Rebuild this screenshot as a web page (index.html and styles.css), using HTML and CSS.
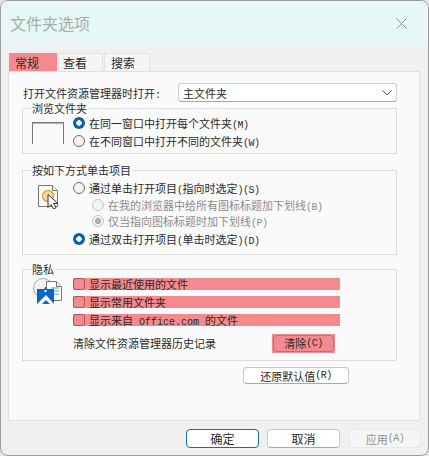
FILE: index.html
```html
<!DOCTYPE html>
<html lang="zh-CN">
<head>
<meta charset="utf-8">
<title>文件夹选项</title>
<link rel="stylesheet" href="styles.css">
</head>
<body>
<div class="window">
  <header class="titlebar">
    <span class="title">文件夹选项</span>
    <svg class="close" width="11" height="11" viewBox="0 0 11 11"><path d="M.5.5l10 10M10.500.5l-10 10" stroke="#8a8f8f" fill="none"/></svg>
  </header>
  <main class="body">
    <nav class="tabs">
      <span class="tab tab-active">常规</span>
      <span class="tab">查看</span>
      <span class="tab tab-last">搜索</span>
    </nav>
    <section class="panel">
      <div class="open-row">
        <span class="open-label">打开文件资源管理器时打开<span class="key">:</span></span>
        <div class="select">
          <span>主文件夹</span>
          <svg width="10" height="6" viewBox="0 0 10 6"><path d="M.5.5l4.500 4.500 4.500-4.500" stroke="#555" fill="none"/></svg>
        </div>
      </div>

      <div class="group group-browse">
        <span class="legend">浏览文件夹</span>
        <div class="icon-col icon-browse">
          <svg width="32" height="22" viewBox="0 0 32 22"><path d="M.5 22V.5h31V22" fill="none" stroke="#777"/><path d="M0 0h32v1.500H0z" fill="#777"/><path d="M24 1.500h1v1h-1zM26 1.500h1v1h-1zM28 1.500h1v1h-1z" fill="#bbb"/></svg>
        </div>
        <div class="options">
          <label class="radio-row"><span class="radio radio-on"></span><span>在同一窗口中打开每个文件夹<span class="key">(M)</span></span></label>
          <label class="radio-row"><span class="radio"></span><span>在不同窗口中打开不同的文件夹<span class="key">(W)</span></span></label>
        </div>
      </div>

      <div class="group group-click">
        <span class="legend">按如下方式单击项目</span>
        <div class="icon-col icon-click">
          <svg width="22" height="24" viewBox="0 0 22 24">
            <path d="M.5 21.500V.5h14l5 5v16z" fill="#fafafa" stroke="#777"/>
            <path d="M14.500.5v5h5" fill="#eee" stroke="#777"/>
            <circle cx="10" cy="11" r="5.500" fill="#fbd9a0" stroke="#f2a33a" stroke-width="1.500"/>
            <path d="M10 9.500v13l3-3 2.500 4.500 2.500-1.300-2.500-4.200h4.500z" fill="#fff" stroke="#333"/>
          </svg>
        </div>
        <div class="options">
          <label class="radio-row"><span class="radio"></span><span>通过单击打开项目<span class="key">(</span>指向时选定<span class="key">)(S)</span></span></label>
          <label class="radio-row radio-sub is-disabled"><span class="radio radio-disabled"></span><span>在我的浏览器中给所有图标标题加下划线<span class="key">(B)</span></span></label>
          <label class="radio-row radio-sub is-disabled"><span class="radio radio-disabled radio-disabled-on"></span><span>仅当指向图标标题时加下划线<span class="key">(P)</span></span></label>
          <label class="radio-row"><span class="radio radio-on"></span><span>通过双击打开项目<span class="key">(</span>单击时选定<span class="key">)(D)</span></span></label>
        </div>
      </div>

      <div class="group group-privacy">
        <span class="legend">隐私</span>
        <div class="icon-col icon-privacy">
          <svg width="31" height="27" viewBox="0 0 31 27">
            <circle cx="10" cy="10" r="9.500" fill="#f2f2f2" stroke="#aaa"/>
            <path d="M13.500 3.500h10l5 5v14h-15z" fill="#fff" stroke="#777"/>
            <path d="M23.500 3.500v5h5" fill="#eee" stroke="#777"/>
            <path d="M18 10h8M18 13h8M18 16h8" stroke="#3aa0e6"/>
            <path d="M4 11h7l1-2h1l1 2h7v15H4z" fill="#0a63c9"/>
            <path d="M4 26l9-9 8 9h-4l-4-4-4 4z" fill="#fff"/>
            <circle cx="12.500" cy="13" r="1.200" fill="#fff"/>
          </svg>
        </div>
        <div class="options">
          <label class="check-row"><span class="check"></span><span>显示最近使用的文件</span></label>
          <label class="check-row"><span class="check"></span><span>显示常用文件夹</span></label>
          <label class="check-row"><span class="check"></span><span>显示来自<span class="latin"> Office.com </span>的文件</span></label>
          <div class="clear-row">
            <span>清除文件资源管理器历史记录</span>
            <span class="clear-wrap"><button class="btn btn-clear">清除<span class="key">(C)</span></button></span>
          </div>
        </div>
      </div>

      <div class="restore-row"><button class="btn btn-restore">还原默认值<span class="key">(R)</span></button></div>
    </section>
    <footer class="footer">
      <button class="btn btn-foot btn-primary">确定</button>
      <button class="btn btn-foot">取消</button>
      <button class="btn btn-foot btn-disabled">应用<span class="key">(A)</span></button>
    </footer>
  </main>
</div>
</body>
</html>
```
FILE: styles.css
```css
* { box-sizing: border-box; }
html, body { margin: 0; padding: 0; }
body {
  width: 429px;
  height: 456px;
  overflow: hidden;
  background: #e4e4e4;
  font-family: "Noto Sans CJK SC", sans-serif;
  font-size: 11px;
  color: #2a2a2a;
}
.key { font-family: "Liberation Mono", monospace; font-size: 10px; letter-spacing: -.5px; }
.latin { font-family: "Liberation Mono", monospace; font-size: 10px; white-space: pre; }
.window {
  width: 429px;
  height: 456px;
  border: 1px solid #9c9c9c;
  border-radius: 8px;
  overflow: hidden;
  background: #f0f0f0;
  display: flex;
  flex-direction: column;
}
.titlebar {
  height: 44px;
  flex: none;
  background: #e6f7f6;
  display: flex;
  align-items: center;
  justify-content: space-between;
  padding: 0 21px 0 9px;
}
.title {
  font-size: 16px;
  color: #a6adad;
}
.body {
  flex: 1;
  display: flex;
  flex-direction: column;
  padding: 8px 7px 0 7px;
}
.tabs {
  display: flex;
  height: 18px;
  padding-left: 1px;
  gap: 1px;
}
.tab {
  height: 18px;
  width: 45px;
  background: #f5f5f5;
  border: 1px solid #e0e0e0;
  border-bottom: 0;
  display: flex;
  align-items: center;
  padding-left: 4px;
  font-size: 12px;
  line-height: 1;
}
.tab-active {
  width: 48px;
  background: #f48a8f;
  border-color: #f48a8f;
  padding-left: 5px;
}
.tab-last { width: 46px; padding-left: 6px; }
.panel {
  width: 412px;
  height: 350px;
  flex: none;
  border: 1px solid #dfdfdf;
  background: #fafafa;
  padding: 11px 0 0 14px;
}
.open-row {
  display: flex;
  align-items: center;
  height: 19px;
  margin-bottom: 6px;
}
.open-label { width: 155px; flex: none; }
.select {
  width: 219px;
  height: 19px;
  background: #fff;
  border: 1px solid #cfcfcf;
  border-bottom-color: #a8a8a8;
  border-radius: 3px;
  display: flex;
  align-items: center;
  justify-content: space-between;
  padding: 0 4px 0 4px;
}
.group {
  position: relative;
  width: 375px;
  margin-left: -1px;
  border: 1px solid #dcdcdc;
  display: flex;
}
.group-browse { height: 46px; padding-top: 5px; margin-bottom: 16px; }
.group-click { height: 85px; padding-top: 9px; margin-bottom: 14px; }
.group-privacy { height: 92px; padding-top: 8px; margin-bottom: 6px; }
.legend {
  position: absolute;
  top: -8px;
  left: 8px;
  padding: 0 1px;
  line-height: 15px;
  background: #fafafa;
}
.icon-col { width: 50px; flex: none; padding-left: 9px; }
.icon-browse { padding-top: 8px; }
.icon-click { padding-left: 15px; padding-top: 5px; }
.icon-privacy { padding-left: 10px; }
.options { display: flex; flex-direction: column; }
.radio-row {
  height: 18px;
  display: flex;
  align-items: center;
  gap: 4px;
  white-space: pre;
}
.group-click .radio-row { height: 16.500px; }
.group-click .radio-row:last-child { height: 19.500px; }
.radio-sub { padding-left: 19px; }
.is-disabled { color: #8a8a8a; }
.radio {
  width: 12px;
  height: 12px;
  flex: none;
  border-radius: 50%;
  border: 1px solid #6d6d6d;
  background: #f4f4f4;
}
.radio-on { border: 0; background: radial-gradient(circle, #fff 0 2.500px, #0a5fb4 3px); }
.radio-disabled { border-color: #c4c4c4; background: #f4f4f4; }
.radio-disabled-on { background: radial-gradient(circle, #b0b0b0 0 3px, #f4f4f4 3.500px); }
.check-row {
  width: 267px;
  height: 12px;
  background: #f4898e;
  display: flex;
  align-items: center;
  gap: 4px;
  margin-bottom: 6px;
  white-space: pre;
}
.check {
  width: 12px;
  height: 12px;
  flex: none;
  border: 1px solid #a0585f;
  border-radius: 3px;
}
.clear-row {
  display: flex;
  align-items: center;
  justify-content: space-between;
  width: 262px;
  height: 20px;
  margin-top: 1px;
}
.clear-wrap { background: #f4898e; padding: 1px; display: flex; }
.btn {
  font: inherit;
  color: #2a2a2a;
  background: #fff;
  border: 1px solid #c8c8c8;
  border-bottom-color: #a8a8a8;
  border-radius: 4px;
  padding: 0;
  display: flex;
  align-items: center;
  justify-content: center;
}
.btn-clear {
  width: 61px;
  height: 17px;
  background: #f4898e;
  border-color: #c66a70;
}
.restore-row { width: 326px; display: flex; justify-content: flex-end; }
.btn-restore { width: 106px; height: 17px; }
.footer {
  display: flex;
  gap: 8px;
  padding: 8px 0 0 178px;
}
.btn-foot { width: 73px; height: 19px; font-size: 12px; }
.btn-primary { border: 1px solid #0a6cc4; }
.btn-disabled { background: #f5f5f5; border-color: #e8e8e8; color: #8f8f8f; width: 72px; margin-left: 1px; font-size: 11px; }
```
